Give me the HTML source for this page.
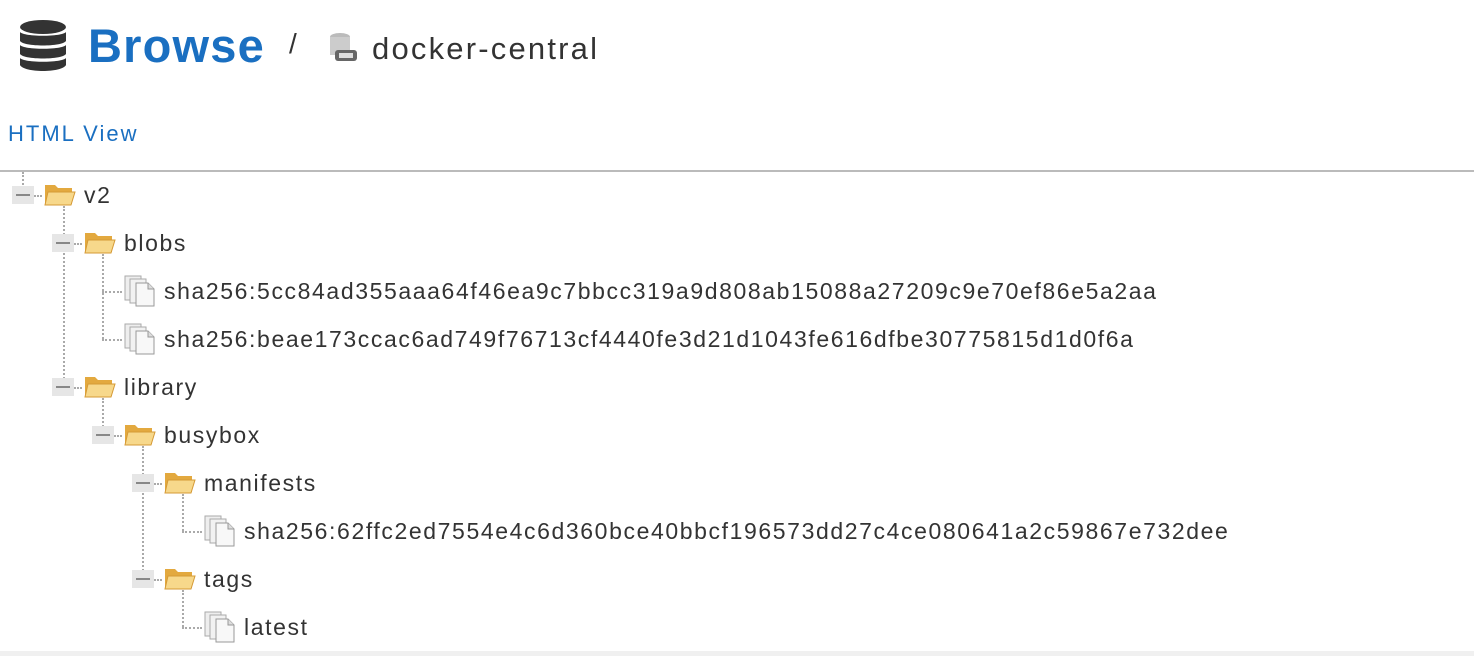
<!DOCTYPE html>
<html><head><meta charset="utf-8"><style>
body{margin:0;width:1474px;height:656px;background:#fff;position:relative;overflow:hidden;font-family:"Liberation Sans",sans-serif;color:#333}
.a{position:absolute}
.t{position:absolute;font-size:23px;line-height:26px;color:#333;letter-spacing:1.6px;white-space:nowrap}
.box{position:absolute;width:22px;height:18px;background:#e6e6e6}
.box:after{content:"";position:absolute;left:4px;top:8px;width:14px;height:2px;background:#888}
.v{position:absolute;width:0;border-left:2px dotted #aaa}
.h{position:absolute;height:0;border-top:2px dotted #aaa}
</style></head><body>
<svg class="a" style="left:18px;top:20px" width="50" height="52" viewBox="0 0 50 52">
<g fill="#333"><ellipse cx="25" cy="7" rx="23" ry="7"/><path d="M2 12c4 5 42 5 46 0v9c-4 6-42 6-46 0z"/><path d="M2 25c4 5 42 5 46 0v9c-4 6-42 6-46 0z"/><path d="M2 38c4 5 42 5 46 0v7c-4 8-42 8-46 0z"/></g></svg>
<div class="a" style="left:88px;top:18px;font-size:47px;font-weight:bold;color:#1a6fc1;line-height:56px;letter-spacing:1.2px">Browse</div>
<div class="a" style="left:289px;top:28px;font-size:28px;color:#333">/</div>
<svg class="a" style="left:327px;top:32px" width="32" height="32" viewBox="0 0 32 32"><ellipse cx="13" cy="5" rx="10" ry="4" fill="#bbb"/><rect x="3" y="5" width="20" height="18" fill="#ccc"/><rect x="8" y="18" width="22" height="11" rx="3" fill="#666"/><rect x="12" y="21" width="14" height="5" fill="#ddd"/></svg>
<div class="a" style="left:372px;top:30px;font-size:31px;color:#333;line-height:38px;letter-spacing:2.2px">docker-central</div>
<div class="a" style="left:8px;top:121px;font-size:22px;color:#1a6fc1;letter-spacing:2px">HTML View</div>
<div class="a" style="left:0;top:170px;width:1474px;height:2px;background:#bbb"></div>
<div class="a" style="left:0;top:651px;width:1474px;height:5px;background:#f0f0f0"></div>

<svg width="0" height="0" style="position:absolute"><defs>
<g id="fo"><path d="M1 3h10l3 3h14v16H1z" fill="#e3a93f"/><path d="M4 10h27l-4 13H1z" fill="#f7d88b" stroke="#d59a36"/></g>
<g id="fi"><rect x="1" y="1" width="16" height="24" fill="#eee" stroke="#aaa"/><rect x="6" y="4" width="16" height="24" fill="#f2f2f2" stroke="#aaa"/><path d="M12 8h12l6 6v17H12z" fill="#f8f8f8" stroke="#999"/><path d="M24 8v6h6" fill="#ddd" stroke="#999"/></g>
</defs></svg>

<div class="v" style="left:22px;top:172px;height:16px"></div>
<div class="v" style="left:63px;top:206px;height:181px"></div>
<div class="v" style="left:102px;top:254px;height:85px"></div>
<div class="v" style="left:102px;top:398px;height:37px"></div>
<div class="v" style="left:142px;top:446px;height:133px"></div>
<div class="v" style="left:182px;top:494px;height:37px"></div>
<div class="v" style="left:182px;top:590px;height:37px"></div>
<div class="h" style="left:102px;top:291px;width:20px"></div>
<div class="h" style="left:102px;top:339px;width:20px"></div>
<div class="h" style="left:182px;top:531px;width:20px"></div>
<div class="h" style="left:182px;top:627px;width:20px"></div>

<div class="box" style="left:12px;top:186px"></div><div class="h" style="left:34px;top:195px;width:8px"></div>
<svg class="a" style="left:44px;top:182px" width="32" height="26"><use href="#fo"/></svg><div class="t" style="left:84px;top:182px">v2</div>

<div class="box" style="left:52px;top:234px"></div><div class="h" style="left:74px;top:243px;width:8px"></div>
<svg class="a" style="left:84px;top:230px" width="32" height="26"><use href="#fo"/></svg><div class="t" style="left:124px;top:230px">blobs</div>

<svg class="a" style="left:124px;top:275px" width="34" height="34"><use href="#fi"/></svg><div class="t" style="left:164px;top:278px">sha256:5cc84ad355aaa64f46ea9c7bbcc319a9d808ab15088a27209c9e70ef86e5a2aa</div>
<svg class="a" style="left:124px;top:323px" width="34" height="34"><use href="#fi"/></svg><div class="t" style="left:164px;top:326px">sha256:beae173ccac6ad749f76713cf4440fe3d21d1043fe616dfbe30775815d1d0f6a</div>

<div class="box" style="left:52px;top:378px"></div><div class="h" style="left:74px;top:387px;width:8px"></div>
<svg class="a" style="left:84px;top:374px" width="32" height="26"><use href="#fo"/></svg><div class="t" style="left:124px;top:374px">library</div>

<div class="box" style="left:92px;top:426px"></div><div class="h" style="left:114px;top:435px;width:8px"></div>
<svg class="a" style="left:124px;top:422px" width="32" height="26"><use href="#fo"/></svg><div class="t" style="left:164px;top:422px">busybox</div>

<div class="box" style="left:132px;top:474px"></div><div class="h" style="left:154px;top:483px;width:8px"></div>
<svg class="a" style="left:164px;top:470px" width="32" height="26"><use href="#fo"/></svg><div class="t" style="left:204px;top:470px">manifests</div>

<svg class="a" style="left:204px;top:515px" width="34" height="34"><use href="#fi"/></svg><div class="t" style="left:244px;top:518px">sha256:62ffc2ed7554e4c6d360bce40bbcf196573dd27c4ce080641a2c59867e732dee</div>

<div class="box" style="left:132px;top:570px"></div><div class="h" style="left:154px;top:579px;width:8px"></div>
<svg class="a" style="left:164px;top:566px" width="32" height="26"><use href="#fo"/></svg><div class="t" style="left:204px;top:566px">tags</div>

<svg class="a" style="left:204px;top:611px" width="34" height="34"><use href="#fi"/></svg><div class="t" style="left:244px;top:614px">latest</div>
</body></html>
